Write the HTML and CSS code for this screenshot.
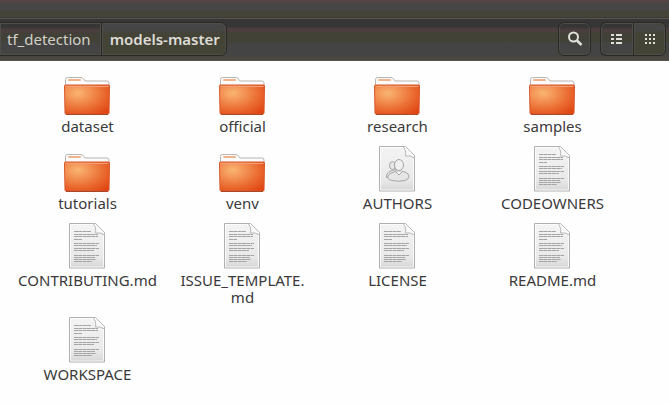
FILE: index.html
```html
<!DOCTYPE html>
<html lang="en">
<head>
<meta charset="utf-8">
<title>models-master</title>
<link rel="stylesheet" href="styles.css">
</head>
<body>
<svg class="defs" aria-hidden="true">
  <defs>
    <radialGradient id="orange" cx=".3" cy=".28" r=".9">
      <stop offset="0" stop-color="#f9b573"/>
      <stop offset=".3" stop-color="#f39254"/>
      <stop offset=".65" stop-color="#ea6a30"/>
      <stop offset="1" stop-color="#e04512"/>
    </radialGradient>
    <linearGradient id="paper" x1="0" y1="0" x2="0" y2="1">
      <stop offset="0" stop-color="#f4f4f4"/>
      <stop offset=".75" stop-color="#e9e9e9"/>
      <stop offset="1" stop-color="#d6d6d6"/>
    </linearGradient>
    <symbol id="folder" viewBox="0 0 48 46">
      <path d="M1.500 20V10.500q0-2 2-2H17q1.500 0 2.500 1.500l1.500 2H43q2 0 2 2V20z" fill="#fbfbfb" stroke="#b9b5b3"/>
      <rect x="4" y="10" width="13" height="2" rx="1" fill="#f0b48c"/>
      <path d="M.5 17q0-1 1-1h43q1 0 1 1l-.5 27q0 1-1 1h-42q-1 0-1-1z" fill="url(#orange)" stroke="#d9572a"/>
      <path d="M1.500 17.500h43" stroke="#f3a077"/>
      <path d="M2 45.500h42" stroke="#a8482a"/>
    </symbol>
    <symbol id="page" viewBox="0 0 48 46">
      <path d="M5.500.5h26l9 9v35.500h-35z" fill="url(#paper)" stroke="#b0b0b0"/>
      <path d="M6.500 1.500h24M6.500 1.500v42.500h33V11" fill="none" stroke="#fff" stroke-opacity=".75"/>
      <path d="M29 .5h2.500l9 9V12q-4-3-9-2 1-6-2.500-9.500z" fill="#fafafa" stroke="#b8b8b8"/>
    </symbol>
    <symbol id="text" viewBox="0 0 48 46">
      <use href="#page" width="48" height="46"/>
      <path d="M10 8.500h17M10 11.500h24M10 13.500h24M10 16.500h8M10 20.500h25M10 22.500h23M10 25.500h25M10 27.500h20M10 32.500h25M10 34.500h21M10 36.500h22M10 38.500h18" stroke="#a4a4a4" stroke-dasharray="4 .3"/>
    </symbol>
    <symbol id="people" viewBox="0 0 48 46">
      <use href="#page" width="48" height="46"/>
      <g fill="#e6e6e6" stroke="#a6a6a6">
        <path d="M12.500 31.500q-1-6 9-8l3 8z"/>
        <ellipse cx="18.500" cy="19.500" rx="3" ry="4"/>
        <path d="M18 34.500q-5-1-4-4.500 2-4 11-5 9 .5 10 5 0 3.500-4 4.500-6.500 1.500-13 0z"/>
        <path d="M21.500 25.500l3.500 3.500 3.500-3.500" fill="#f6f6f6"/>
        <ellipse cx="25" cy="19" rx="4.500" ry="5.500" fill="#f0f0f0"/>
      </g>
    </symbol>
  </defs>
</svg>
<header class="toolbar">
  <nav class="path" aria-label="Path">
    <button class="crumb" type="button">tf_detection</button>
    <button class="crumb current" type="button">models-master</button>
  </nav>
  <div class="tools">
    <button class="tool" type="button" aria-label="Search">
      <svg width="16" height="16" viewBox="0 0 16 16"><circle cx="6.500" cy="6" r="4.500" fill="none" stroke="#e2e0da" stroke-width="2"/><path d="M10 9.500l4.500 4.500" stroke="#e2e0da" stroke-width="2.500"/></svg>
    </button>
    <div class="views">
      <button class="tool" type="button" aria-label="List view">
        <svg width="12" height="12" viewBox="0 0 12 12" fill="#e2e0da"><path d="M0 1h3v2H0zM5 1h6v2H5zM0 5h3v2H0zM5 5h6v2H5zM0 9h3v2H0zM5 9h6v2H5z"/></svg>
      </button>
      <button class="tool current" type="button" aria-label="Icon view">
        <svg width="12" height="12" viewBox="0 0 12 12" fill="#e2e0da"><path d="M1 1h2v2H1zM5 1h2v2H5zM9 1h2v2H9zM1 5h2v2H1zM5 5h2v2H5zM9 5h2v2H9zM1 9h2v2H1zM5 9h2v2H5zM9 9h2v2H9z"/></svg>
      </button>
    </div>
  </div>
</header>
<main class="content">
  <ul class="files">
    <li class="file"><svg class="icon"><use href="#folder"/></svg><span>dataset</span></li>
    <li class="file"><svg class="icon"><use href="#folder"/></svg><span>official</span></li>
    <li class="file"><svg class="icon"><use href="#folder"/></svg><span>research</span></li>
    <li class="file"><svg class="icon"><use href="#folder"/></svg><span>samples</span></li>
    <li class="file"><svg class="icon"><use href="#folder"/></svg><span>tutorials</span></li>
    <li class="file"><svg class="icon"><use href="#folder"/></svg><span>venv</span></li>
    <li class="file"><svg class="icon"><use href="#people"/></svg><span>AUTHORS</span></li>
    <li class="file"><svg class="icon"><use href="#text"/></svg><span>CODEOWNERS</span></li>
    <li class="file"><svg class="icon"><use href="#text"/></svg><span>CONTRIBUTING.md</span></li>
    <li class="file"><svg class="icon"><use href="#text"/></svg><span>ISSUE_TEMPLATE.<wbr>md</span></li>
    <li class="file"><svg class="icon"><use href="#text"/></svg><span>LICENSE</span></li>
    <li class="file"><svg class="icon"><use href="#text"/></svg><span>README.md</span></li>
    <li class="file"><svg class="icon"><use href="#text"/></svg><span>WORKSPACE</span></li>
  </ul>
</main>
</body>
</html>
```
FILE: styles.css
```css
* {
  box-sizing: border-box;
}

body {
  margin: 0;
  background: #fefefe;
  color: #3a3a3a;
  font-family: "Noto Sans", "Open Sans", sans-serif;
  font-size: 15px;
  line-height: 17px;
}

.defs {
  position: absolute;
  width: 0;
  height: 0;
}

.toolbar {
  display: flex;
  align-items: center;
  justify-content: space-between;
  padding: 22px 3px 4px 0;
  border-bottom: 1px solid #55504a;
  background: linear-gradient(#574646 0 2px, #464646 3px 10px, #444438 11px 17px, #302f2c 18px, #5a5550 18px 19px, #363636 19px 27px, #4c3e3e 28px 31px, #424236 33px 41px, #444444 44px 55px, #4a4640 57px);
}

.path,
.tools,
.views {
  display: flex;
}

.tools {
  gap: 9px;
}

button {
  display: flex;
  align-items: center;
  justify-content: center;
  height: 34px;
  margin: 0;
  border: 1px solid #292824;
  background: linear-gradient(#363636 0 4px, #4a3e3e 7px 9px, #414137 11px 17px, #444444 21px);
  box-shadow: inset 0 0 0 1px #504e48;
  color: #d3d0c9;
  font: inherit;
}

.current {
  background: linear-gradient(#464646 0 7px, #434336 11px);
}

.crumb {
  padding: 0 8px;
  border-right: 0;
}

.crumb:first-child {
  padding: 0 10px 0 7px;
  border-left: 0;
}

.crumb.current {
  padding: 0 6px 0 8px;
  border-right: 1px solid #292824;
  border-radius: 0 6px 6px 0;
  color: #dedcd6;
  font-weight: 600;
}

.tool {
  width: 33px;
  padding: 0;
  border-radius: 6px;
}

.views .tool:first-child {
  border-right: 0;
  border-radius: 6px 0 0 6px;
}

.views .tool:last-child {
  border-radius: 0 6px 6px 0;
}

.content {
  padding: 8px 39px 8px 10px;
}

.files {
  display: grid;
  grid-template-columns: repeat(4, 1fr);
  gap: 11px 0;
  margin: 0;
  padding: 0;
  list-style: none;
}

.file {
  display: flex;
  flex-direction: column;
  align-items: center;
  gap: 3px;
  text-align: center;
}

.file span {
  max-width: 140px;
}

.icon {
  width: 48px;
  height: 46px;
}
```
